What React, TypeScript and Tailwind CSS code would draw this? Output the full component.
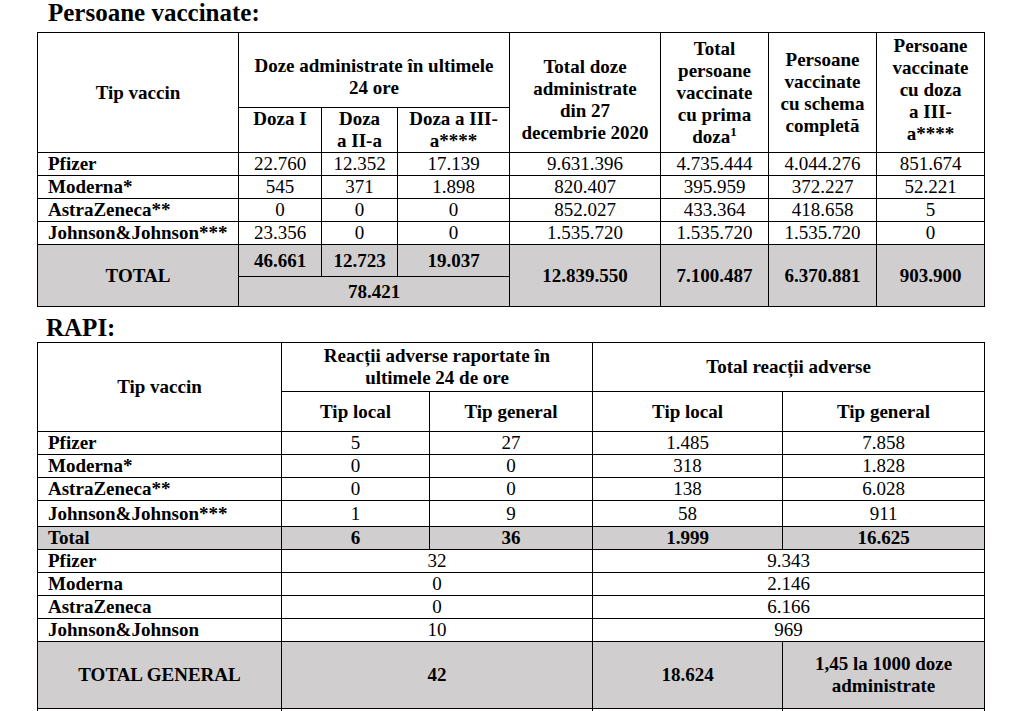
import React from 'react';

const td = 'border border-black p-0';
const num = `${td} text-center align-middle`;
const name = `${td} pl-[10px] text-left align-middle font-bold whitespace-nowrap`;
const head = `${td} text-center align-middle font-bold whitespace-nowrap`;
const grey = 'bg-[#d0cece]';

const vaccinRows = [
  ['Pfizer', '22.760', '12.352', '17.139', '9.631.396', '4.735.444', '4.044.276', '851.674'],
  ['Moderna*', '545', '371', '1.898', '820.407', '395.959', '372.227', '52.221'],
  ['AstraZeneca**', '0', '0', '0', '852.027', '433.364', '418.658', '5'],
  ['Johnson&Johnson***', '23.356', '0', '0', '1.535.720', '1.535.720', '1.535.720', '0'],
];

const rapiRows = [
  ['Pfizer', '5', '27', '1.485', '7.858', 'h-[23px]'],
  ['Moderna*', '0', '0', '318', '1.828', 'h-[23px]'],
  ['AstraZeneca**', '0', '0', '138', '6.028', 'h-[23px]'],
  ['Johnson&Johnson***', '1', '9', '58', '911', 'h-[26px]'],
];

const rapiTotals = [
  ['Pfizer', '32', '9.343', 'h-[23px]'],
  ['Moderna', '0', '2.146', 'h-[23px]'],
  ['AstraZeneca', '0', '6.166', 'h-[23px]'],
  ['Johnson&Johnson', '10', '969', 'h-[22px]'],
];

export default function App() {
  return (
    <div className="min-h-screen bg-white text-black font-['Liberation_Serif','Times_New_Roman',serif]">
      <h1 className="pl-[48px] pt-0 mb-[6px] text-[25px] leading-[26px] font-bold">Persoane vaccinate:</h1>

      <table className="ml-[37px] w-[948px] table-fixed border-collapse text-[19px] leading-[22px]">
        <colgroup>
          <col className="w-[201px]" />
          <col className="w-[83px]" />
          <col className="w-[76px]" />
          <col className="w-[112px]" />
          <col className="w-[151px]" />
          <col className="w-[108px]" />
          <col className="w-[108px]" />
          <col className="w-[108px]" />
        </colgroup>
        <tbody>
          <tr className="h-[75px]">
            <td rowSpan={2} className={head}>Tip vaccin</td>
            <td colSpan={3} className={`${head} pt-[14px]`}>
              Doze administrate în ultimele
              <br />
              24 ore
            </td>
            <td rowSpan={2} className={`${head} pt-[14px]`}>
              Total doze
              <br />
              administrate
              <br />
              din 27
              <br />
              decembrie 2020
            </td>
            <td rowSpan={2} className={head}>
              Total
              <br />
              persoane
              <br />
              vaccinate
              <br />
              cu prima
              <br />
              doza<sup className="text-[13px] leading-none">1</sup>
            </td>
            <td rowSpan={2} className={head}>
              Persoane
              <br />
              vaccinate
              <br />
              cu schema
              <br />
              completă
            </td>
            <td rowSpan={2} className={`${head} pb-[6px]`}>
              Persoane
              <br />
              vaccinate
              <br />
              cu doza
              <br />
              a III-
              <br />
              a****
            </td>
          </tr>
          <tr className="h-[45px]">
            <td className={`${td} text-center align-top font-bold`}>Doza I</td>
            <td className={`${td} text-center align-top font-bold`}>
              Doza
              <br />a II-a
            </td>
            <td className={`${td} text-center align-top font-bold`}>
              Doza a III-
              <br />
              a****
            </td>
          </tr>
          {vaccinRows.map(r => (
            <tr key={r[0]} className="h-[23px]">
              <td className={name}>{r[0]}</td>
              {r.slice(1).map((v, i) => (
                <td key={i} className={num}>{v}</td>
              ))}
            </tr>
          ))}
          <tr className={`h-[32px] ${grey} font-bold`}>
            <td rowSpan={2} className={head}>TOTAL</td>
            <td className={num}>46.661</td>
            <td className={num}>12.723</td>
            <td className={num}>19.037</td>
            <td rowSpan={2} className={num}>12.839.550</td>
            <td rowSpan={2} className={num}>7.100.487</td>
            <td rowSpan={2} className={num}>6.370.881</td>
            <td rowSpan={2} className={num}>903.900</td>
          </tr>
          <tr className={`h-[30px] ${grey} font-bold`}>
            <td colSpan={3} className={num}>78.421</td>
          </tr>
        </tbody>
      </table>

      <h2 className="pl-[46px] mt-[8px] mb-px text-[25px] leading-[26px] font-bold">RAPI:</h2>

      <table className="ml-[37px] w-[948px] table-fixed border-collapse text-[19px] leading-[22px]">
        <colgroup>
          <col className="w-[244px]" />
          <col className="w-[148px]" />
          <col className="w-[163px]" />
          <col className="w-[190px]" />
          <col className="w-[202px]" />
        </colgroup>
        <tbody>
          <tr className="h-[49px]">
            <td rowSpan={2} className={head}>Tip vaccin</td>
            <td colSpan={2} className={head}>
              Reacții adverse raportate în
              <br />
              ultimele 24 de ore
            </td>
            <td colSpan={2} className={head}>Total reacții adverse</td>
          </tr>
          <tr className="h-[40px]">
            <td className={head}>Tip local</td>
            <td className={head}>Tip general</td>
            <td className={head}>Tip local</td>
            <td className={head}>Tip general</td>
          </tr>
          {rapiRows.map(r => (
            <tr key={r[0]} className={r[5]}>
              <td className={name}>{r[0]}</td>
              <td className={num}>{r[1]}</td>
              <td className={num}>{r[2]}</td>
              <td className={num}>{r[3]}</td>
              <td className={num}>{r[4]}</td>
            </tr>
          ))}
          <tr className={`h-[23px] ${grey} font-bold`}>
            <td className={name}>Total</td>
            <td className={num}>6</td>
            <td className={num}>36</td>
            <td className={num}>1.999</td>
            <td className={num}>16.625</td>
          </tr>
          {rapiTotals.map(r => (
            <tr key={r[0]} className={r[3]}>
              <td className={name}>{r[0]}</td>
              <td colSpan={2} className={num}>{r[1]}</td>
              <td colSpan={2} className={num}>{r[2]}</td>
            </tr>
          ))}
          <tr className={`h-[67px] ${grey} font-bold`}>
            <td className={head}>TOTAL GENERAL</td>
            <td colSpan={2} className={num}>42</td>
            <td className={num}>18.624</td>
            <td className={head}>
              1,45 la 1000 doze
              <br />
              administrate
            </td>
          </tr>
          <tr className="h-[23px]">
            <td className={td}></td>
            <td colSpan={2} className={td}></td>
            <td className={td}></td>
            <td className={td}></td>
          </tr>
        </tbody>
      </table>
    </div>
  );
}
